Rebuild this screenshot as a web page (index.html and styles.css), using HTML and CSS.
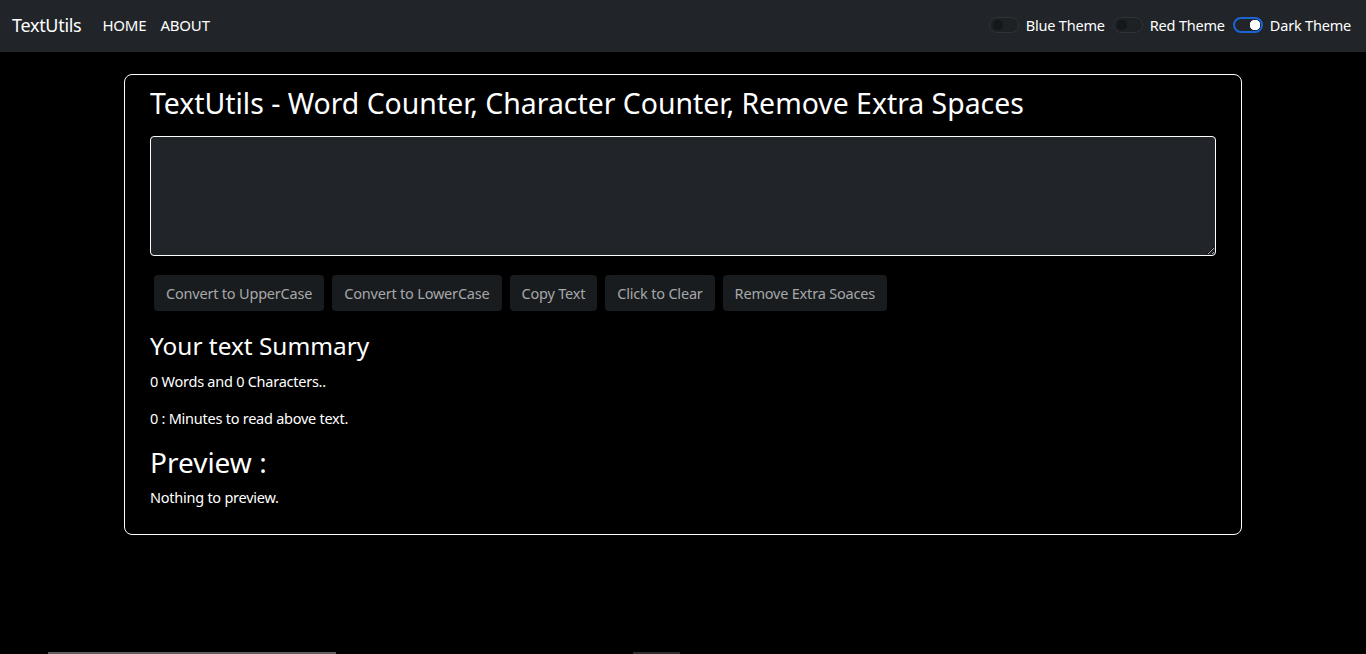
FILE: index.html
```html
<!DOCTYPE html>
<html lang="en">
<head>
<meta charset="utf-8">
<title>TextUtils</title>
<link rel="stylesheet" href="styles.css">
</head>
<body>
<nav class="navbar">
  <div class="nav-left">
    <a class="brand" href="#">TextUtils</a>
    <a class="nav-link" href="#">HOME</a>
    <a class="nav-link" href="#">ABOUT</a>
  </div>
  <div class="nav-right">
    <label class="switch"><input type="checkbox" class="switch-input"><span class="switch-label">Blue Theme</span></label>
    <label class="switch"><input type="checkbox" class="switch-input"><span class="switch-label">Red Theme</span></label>
    <label class="switch"><input type="checkbox" class="switch-input" checked><span class="switch-label">Dark Theme</span></label>
  </div>
</nav>

<main class="card">
  <h1 class="title">TextUtils - Word Counter, Character Counter, Remove Extra Spaces</h1>
  <textarea class="textbox" rows="5"></textarea>
  <div class="buttons">
    <button class="btn" disabled>Convert to UpperCase</button>
    <button class="btn" disabled>Convert to LowerCase</button>
    <button class="btn" disabled>Copy Text</button>
    <button class="btn" disabled>Click to Clear</button>
    <button class="btn" disabled>Remove Extra Soaces</button>
  </div>
  <h2 class="summary">Your text Summary</h2>
  <p class="text">0 Words and 0 Characters..</p>
  <p class="text">0 : Minutes to read above text.</p>
  <h2 class="preview">Preview :</h2>
  <p class="text">Nothing to preview.</p>
</main>

<div class="bottom-strip">
  <span class="strip-a"></span>
  <span class="strip-b"></span>
</div>
</body>
</html>
```
FILE: styles.css
```css
* { box-sizing: border-box; }
html, body { margin: 0; padding: 0; }
body {
  background: #000;
  color: #fff;
  font-family: "Noto Sans", "Open Sans", sans-serif;
  font-size: 14.5px;
  letter-spacing: -0.25px;
  min-height: 654px;
}
.navbar {
  height: 52px;
  background: #212529;
  display: flex;
  align-items: center;
  justify-content: space-between;
  padding: 0 15px 3px 12px;
}
.nav-left { display: flex; align-items: center; }
.brand {
  color: #fff;
  text-decoration: none;
  font-size: 18px;
  letter-spacing: -0.3px;
  line-height: 30px;
  margin-right: 14px;
}
.nav-link {
  color: #fff;
  text-decoration: none;
  font-size: 15px;
  letter-spacing: -0.2px;
  line-height: 24px;
  padding: 0 7px;
}
.nav-right { display: flex; align-items: center; gap: 8px; }
.switch { display: flex; align-items: center; gap: 7px; color: #fff; font-size: 14.5px; letter-spacing: -0.2px; line-height: 24px; }
.switch-input {
  appearance: none;
  -webkit-appearance: none;
  margin: 0;
  width: 30px;
  height: 16px;
  border-radius: 8px;
  border: 1px solid #2f3337;
  background: #1e2124 radial-gradient(circle at 8px 50%, #15181b 0, #15181b 5px, transparent 5.5px);
}
.switch-input:checked {
  border: 2px solid #1c63d6;
  background: #212529 radial-gradient(circle at 20px 50%, #fff 0, #fff 5px, transparent 5.5px);
}

.card {
  width: 1118px;
  margin: 22px auto 0;
  border: 1px solid #fff;
  border-radius: 8px;
  padding: 11px 25px 10px;
}
.title {
  font-size: 28.4px;
  letter-spacing: 0;
  font-weight: 400;
  line-height: 34px;
  margin: 0 0 16px;
}
.textbox {
  display: block;
  width: 100%;
  height: 120px;
  background: #212529;
  color: #fff;
  border: 1px solid #fff;
  border-radius: 4px;
  font-family: inherit;
  font-size: 14.5px;
  margin: 0;
}
.buttons { display: flex; gap: 8px; padding: 0 4px; margin-top: 19px; }
.btn {
  height: 36px;
  padding: 0 12px;
  border: 0;
  border-radius: 4px;
  background: #191c1f;
  color: #a6a7a8;
  font-family: inherit;
  font-size: 14.5px;
  letter-spacing: -0.2px;
  line-height: 24px;
}
.summary {
  font-size: 24.4px;
  letter-spacing: 0;
  font-weight: 400;
  line-height: 30px;
  margin: 20px 0 10px;
}
.text {
  line-height: 21px;
  margin: 0 0 16px;
}
.preview {
  font-size: 28px;
  letter-spacing: 0;
  font-weight: 400;
  line-height: 34px;
  margin: 4px 0 8px;
}
.bottom-strip { position: fixed; left: 0; right: 0; bottom: 0; height: 2px; }
.strip-a { position: absolute; left: 48px; width: 288px; top: 0; height: 2px; background: #5e5e5e; }
.strip-b { position: absolute; left: 633px; width: 47px; top: 0; height: 2px; background: #2e2e2e; }
```
